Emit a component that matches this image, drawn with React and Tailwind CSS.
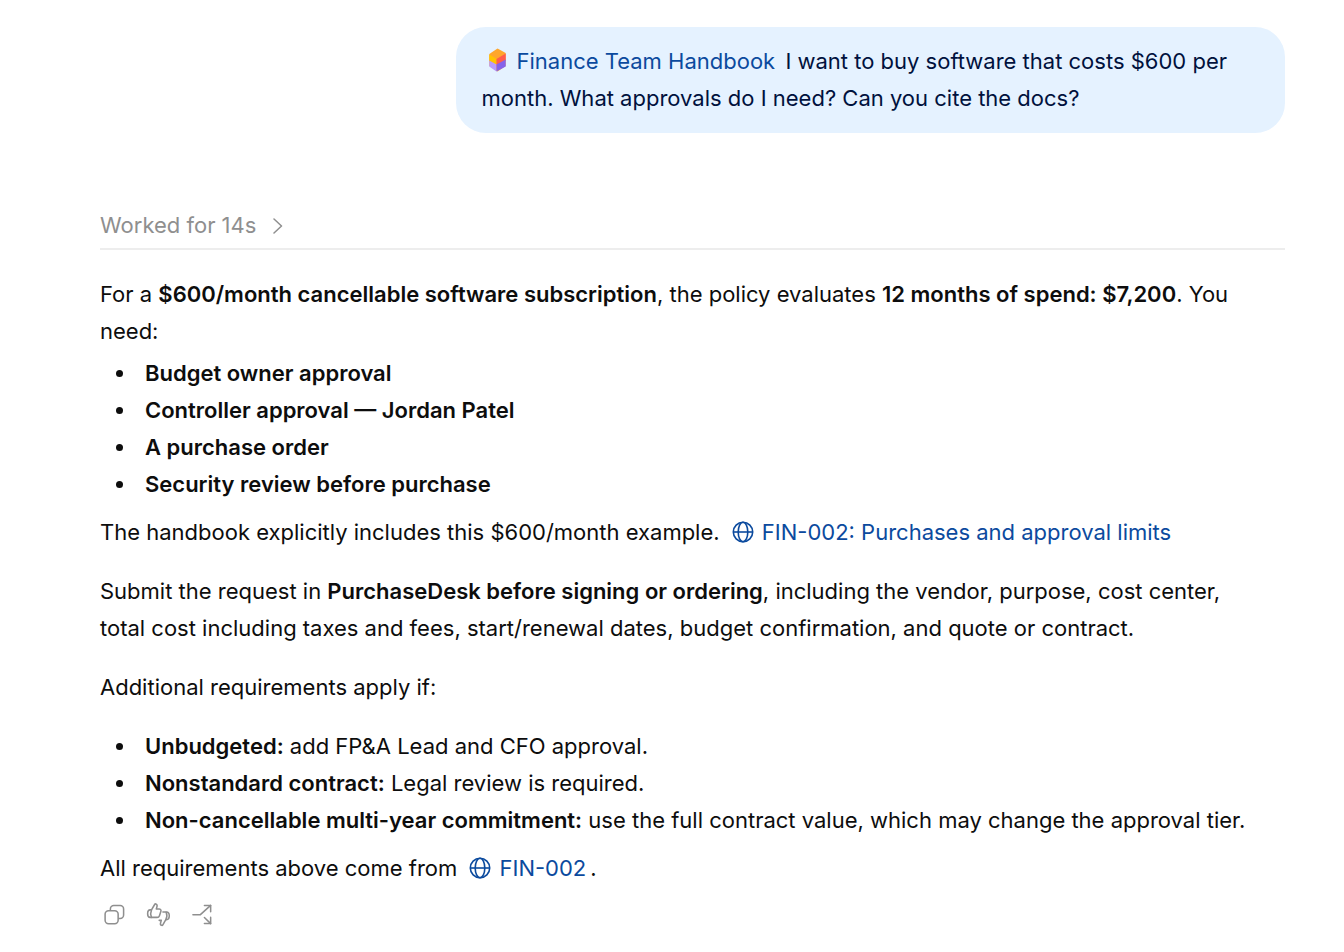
const approvals = [
  'Budget owner approval',
  'Controller approval — Jordan Patel',
  'A purchase order',
  'Security review before purchase',
]

const extras = [
  { label: 'Unbudgeted:', text: 'add FP&A Lead and CFO approval.' },
  { label: 'Nonstandard contract:', text: 'Legal review is required.' },
  { label: 'Non-cancellable multi-year commitment:', text: 'use the full contract value, which may change the approval tier.' },
]

function HandbookIcon() {
  return (
    <svg viewBox="0 0 18 24" className="mr-2.5 ml-1.5 inline-block h-6 w-[19px] align-[-3px]" aria-hidden="true">
      <path d="M9 .5 17.2 5v13L9 23.5.8 18V6z" fill="#ffa62b" />
      <path d="M.8 6.5 8 11v6L.8 13z" fill="#ffc400" />
      <path d="M8 11l9.2-5.5v7L8 18z" fill="#ff5c4d" />
      <path d="M.8 12.5 8 16.6v6.9L.8 18.6z" fill="#b79bff" />
      <path d="M8 16.6l9.2-5v7L8 23.5z" fill="#8562ea" />
    </svg>
  )
}

function GlobeIcon() {
  return (
    <svg viewBox="0 0 22 22" className="mr-2 inline-block size-[22px] align-[-3px]" fill="none" stroke="currentColor" strokeWidth="1.6" aria-hidden="true">
      <circle cx="11" cy="11" r="9.7" />
      <ellipse cx="11" cy="11" rx="4.8" ry="9.7" />
      <path d="M1.3 11h19.4" />
    </svg>
  )
}

function ChevronIcon() {
  return (
    <svg viewBox="0 0 11 16" className="h-4 w-[11px]" fill="none" stroke="currentColor" strokeWidth="1.5" strokeLinecap="round" strokeLinejoin="round" aria-hidden="true">
      <path d="M2 1l7.500 7L2 15" />
    </svg>
  )
}

function CopyIcon() {
  return (
    <svg viewBox="0 0 24 24" className="size-[23px]" fill="none" stroke="currentColor" strokeWidth="1.6" aria-hidden="true">
      <rect x="2.2" y="8" width="13.6" height="13.6" rx="3.6" />
      <path d="M7.7 8V6.2a3.6 3.6 0 0 1 3.6-3.6h6.6a3.6 3.6 0 0 1 3.6 3.6v6.4a3.6 3.6 0 0 1-3.6 3.6h-2.1" />
    </svg>
  )
}

function FeedbackIcon() {
  return (
    <svg viewBox="0 0 26 26" className="size-[25px]" fill="none" stroke="currentColor" strokeWidth="1.6" strokeLinejoin="round" strokeLinecap="round" aria-hidden="true">
      <path d="M5.7 8.2 9 2.6c.2-.5.7-.7 1.2-.6 1.1.3 1.6 1.3 1.3 2.4l-.8 2.8h3c1.3 0 2.2 1.2 1.8 2.4L14 14.200c-.4 1.2-1.3 1.8-2.5 1.800H4.300c-1.600 0-2.600-1.500-2.600-3.800 0-2.400 1-4 2.600-4z" />
      <path d="M5.700 8.200c-1 2.400-1 5.400 0 7.800" />
      <path d="M17.600 10.500h3.700c1.600 0 2.900 1.500 2.900 3.900s-1.300 4-2.900 4h-.7l-3.100 5.400c-.3.500-.7.700-1.200.5-1-.3-1.500-1.200-1.200-2.300l.8-2.900h-2.200" />
      <path d="M21 10.700c1 2.400.9 5.300-.4 7.700" />
    </svg>
  )
}

function BranchIcon() {
  return (
    <svg viewBox="0 0 24 24" className="size-[23px]" fill="none" stroke="currentColor" strokeWidth="1.6" strokeLinecap="round" strokeLinejoin="round" aria-hidden="true">
      <path d="M2 12.2h7.800L20.500 2.500" />
      <path d="M14 2.500h6.500V9" />
      <path d="M14 15.200l6.500 6.300" />
      <path d="M20.500 15v6.500H14" />
    </svg>
  )
}

function DocLink({ children }) {
  return (
    <a href="#fin-002" className="ml-1.5 text-[#0b4a9e]">
      <GlobeIcon />
      {children}
    </a>
  )
}

function BulletItem({ children }) {
  return (
    <li className="flex gap-[22px]">
      <span className="mt-[15px] size-[7px] shrink-0 rounded-full bg-current" />
      <div>{children}</div>
    </li>
  )
}

export default function App() {
  return (
    <main className="bg-white pt-[27px] pr-[59px] pb-6 pl-[100px] font-['Inter','Liberation_Sans',sans-serif] text-[22px] leading-[37px] text-[#0d0d0d]">
      <div className="ml-auto w-[70%] rounded-[30px] bg-[#e5f2ff] px-[26px] py-4 text-[#00113d]">
        <a href="#handbook" className="mr-1 text-[#0b4a9e]">
          <HandbookIcon />
          Finance Team Handbook
        </a>{' '}
        I want to buy software that costs $600 per month. What approvals do I need? Can you cite the docs?
      </div>

      <div className="mt-[74px] border-b-2 border-[#ededed] pb-1 text-[#8f8f8f]">
        <button type="button" className="flex items-center gap-4">
          Worked for 14s
          <ChevronIcon />
        </button>
      </div>

      <p className="mt-[26px] pr-6">
        For a <strong className="font-semibold">$600/month cancellable software subscription</strong>, the policy
        evaluates <strong className="font-semibold">12 months of spend: $7,200</strong>. You need:
      </p>
      <ul className="mt-[5px] pl-4">
        {approvals.map((item) => (
          <BulletItem key={item}>
            <strong className="font-semibold">{item}</strong>
          </BulletItem>
        ))}
      </ul>
      <p className="mt-[11px]">
        The handbook explicitly includes this $600/month example.{' '}
        <DocLink>FIN-002: Purchases and approval limits</DocLink>
      </p>
      <p className="mt-[22px] pr-6">
        Submit the request in <strong className="font-semibold">PurchaseDesk before signing or ordering</strong>,
        including the vendor, purpose, cost center, total cost including taxes and fees, start/renewal dates, budget
        confirmation, and quote or contract.
      </p>
      <p className="mt-[22px]">Additional requirements apply if:</p>
      <ul className="mt-[22px] pl-4">
        {extras.map(({ label, text }) => (
          <BulletItem key={label}>
            <strong className="font-semibold">{label}</strong> {text}
          </BulletItem>
        ))}
      </ul>
      <p className="mt-[11px]">
        All requirements above come from <DocLink>FIN-002</DocLink>
        <span className="ml-1">.</span>
      </p>

      <div className="mt-[15px] flex items-center gap-5 pl-[3px] text-[#8f8f8f]">
        <button type="button" aria-label="Copy"><CopyIcon /></button>
        <button type="button" aria-label="Give feedback"><FeedbackIcon /></button>
        <button type="button" aria-label="Branch"><BranchIcon /></button>
      </div>
    </main>
  )
}
